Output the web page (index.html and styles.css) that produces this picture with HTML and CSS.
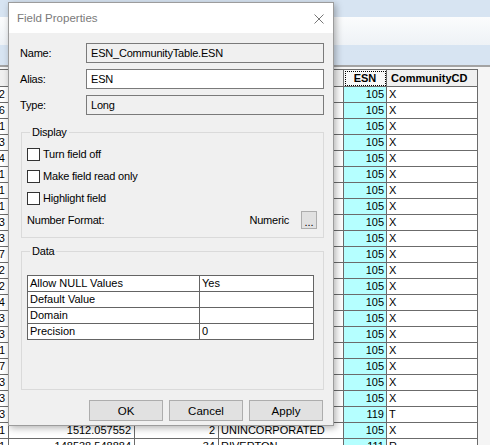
FILE: index.html
```html
<!DOCTYPE html>
<html lang="en">
  <head>
    <meta charset="UTF-8" />
    <meta name="viewport" content="width=device-width, initial-scale=1.0" />
    <title>Attribute Table - Field Properties</title>
    <link rel="stylesheet" href="styles.css">
  </head>
  <body>
    <div class="app">
      <div class="tabs"></div>
      <div class="ribbon"></div>
      <div class="toolbar"></div>
      <div class="grid-wrap">
        <table class="grid">
          <colgroup>
            <col class="w1"><col class="w2"><col class="w3"><col class="w4"><col class="w5"><col class="w6">
          </colgroup>
          <thead>
            <tr><th></th><th>Shape_Area</th><th>CityID</th><th>City</th><th class="focus">ESN</th><th class="txt">CommunityCD</th></tr>
          </thead>
          <tbody>
            <tr><td class="num">1002</td><td class="num">2841.113270</td><td class="num">2</td><td>UNINCORPORATED</td><td class="esn">105</td><td>X</td></tr>
            <tr><td class="num">1006</td><td class="num">5520.904117</td><td class="num">2</td><td>UNINCORPORATED</td><td class="esn">105</td><td>X</td></tr>
            <tr><td class="num">1011</td><td class="num">731.208845</td><td class="num">2</td><td>UNINCORPORATED</td><td class="esn">105</td><td>X</td></tr>
            <tr><td class="num">1013</td><td class="num">12874.660231</td><td class="num">2</td><td>UNINCORPORATED</td><td class="esn">105</td><td>X</td></tr>
            <tr><td class="num">1014</td><td class="num">4402.518890</td><td class="num">2</td><td>UNINCORPORATED</td><td class="esn">105</td><td>X</td></tr>
            <tr><td class="num">1021</td><td class="num">998.730412</td><td class="num">2</td><td>UNINCORPORATED</td><td class="esn">105</td><td>X</td></tr>
            <tr><td class="num">1031</td><td class="num">3316.052274</td><td class="num">2</td><td>UNINCORPORATED</td><td class="esn">105</td><td>X</td></tr>
            <tr><td class="num">1041</td><td class="num">620.481193</td><td class="num">2</td><td>UNINCORPORATED</td><td class="esn">105</td><td>X</td></tr>
            <tr><td class="num">1043</td><td class="num">7745.209938</td><td class="num">2</td><td>UNINCORPORATED</td><td class="esn">105</td><td>X</td></tr>
            <tr><td class="num">1053</td><td class="num">2209.876501</td><td class="num">2</td><td>UNINCORPORATED</td><td class="esn">105</td><td>X</td></tr>
            <tr><td class="num">1057</td><td class="num">15190.332480</td><td class="num">2</td><td>UNINCORPORATED</td><td class="esn">105</td><td>X</td></tr>
            <tr><td class="num">1062</td><td class="num">3408.117622</td><td class="num">2</td><td>UNINCORPORATED</td><td class="esn">105</td><td>X</td></tr>
            <tr><td class="num">1072</td><td class="num">870.905514</td><td class="num">2</td><td>UNINCORPORATED</td><td class="esn">105</td><td>X</td></tr>
            <tr><td class="num">1074</td><td class="num">6112.448027</td><td class="num">2</td><td>UNINCORPORATED</td><td class="esn">105</td><td>X</td></tr>
            <tr><td class="num">1083</td><td class="num">1893.620174</td><td class="num">2</td><td>UNINCORPORATED</td><td class="esn">105</td><td>X</td></tr>
            <tr><td class="num">1093</td><td class="num">4076.311908</td><td class="num">2</td><td>UNINCORPORATED</td><td class="esn">105</td><td>X</td></tr>
            <tr><td class="num">1101</td><td class="num">2530.064416</td><td class="num">2</td><td>UNINCORPORATED</td><td class="esn">105</td><td>X</td></tr>
            <tr><td class="num">1107</td><td class="num">9981.750236</td><td class="num">2</td><td>UNINCORPORATED</td><td class="esn">105</td><td>X</td></tr>
            <tr><td class="num">1113</td><td class="num">1204.887310</td><td class="num">2</td><td>UNINCORPORATED</td><td class="esn">105</td><td>X</td></tr>
            <tr><td class="num">1123</td><td class="num">3650.420581</td><td class="num">2</td><td>UNINCORPORATED</td><td class="esn">105</td><td>X</td></tr>
            <tr><td class="num">1133</td><td class="num">22417.905562</td><td class="num">40</td><td>THAYNE</td><td class="esn">119</td><td>T</td></tr>
            <tr><td class="num">1141</td><td class="num">1512.057552</td><td class="num">2</td><td>UNINCORPORATED</td><td class="esn">105</td><td>X</td></tr>
            <tr><td class="num">1151</td><td class="num">148538.548884</td><td class="num">34</td><td>RIVERTON</td><td class="esn">111</td><td>R</td></tr>
          </tbody>
        </table>
      </div>
    </div>

    <!-- modal dialog, floats over the table -->
    <div class="dialog">
      <div class="titlebar">
        <span class="title">Field Properties</span>
        <svg class="close" width="10" height="10" viewBox="0 0 10 10">
          <path d="M0.5 0.5 L9.5 9.5 M9.5 0.5 L0.5 9.5" stroke="#777" stroke-width="1" fill="none" />
        </svg>
      </div>
      <div class="dlg-body">
        <div class="field-row">
          <label>Name:</label>
          <div class="textbox disabled">ESN_CommunityTable.ESN</div>
        </div>
        <div class="field-row">
          <label>Alias:</label>
          <div class="textbox">ESN</div>
        </div>
        <div class="field-row">
          <label>Type:</label>
          <div class="textbox disabled">Long</div>
        </div>

        <fieldset class="group display">
          <legend>Display</legend>
          <div class="check"><input type="checkbox" class="cb"><span>Turn field off</span></div>
          <div class="check"><input type="checkbox" class="cb"><span>Make field read only</span></div>
          <div class="check"><input type="checkbox" class="cb"><span>Highlight field</span></div>
          <div class="format-row">
            <span>Number Format:</span>
            <span class="format-val">Numeric <button class="dots">...</button></span>
          </div>
        </fieldset>

        <fieldset class="group data">
          <legend>Data</legend>
          <table class="props">
            <tr><td class="key">Allow NULL Values</td><td>Yes</td></tr>
            <tr><td class="key">Default Value</td><td></td></tr>
            <tr><td class="key">Domain</td><td></td></tr>
            <tr><td class="key">Precision</td><td>0</td></tr>
          </table>
        </fieldset>

        <div class="buttons">
          <button class="btn">OK</button>
          <button class="btn">Cancel</button>
          <button class="btn">Apply</button>
        </div>
      </div>
    </div>
  </body>
</html>
```

FILE: styles.css
```css
body {
  margin: 0;
  width: 490px;
  height: 445px;
  overflow: hidden;
  font-family: "Liberation Sans", Arial, sans-serif;
  background: #f5f5f5;
}

/* application frame behind the dialog */
.tabs {
  height: 17px;
  background: #d7e4f2;
}
.ribbon {
  height: 28px;
  background: linear-gradient(#fbfcfd, #eef2f6);
}
.toolbar {
  height: 20px;
  background: #d7e4f2;
  border-bottom: 2px solid #a3a3a3;
}
.grid-wrap {
  padding-top: 2px;
  margin-left: -33px;
}
.grid {
  border-collapse: collapse;
  table-layout: fixed;
  width: 510px;
  font-size: 11px;
  background: #fff;
}
.w1 { width: 41px; }
.w2 { width: 126px; }
.w3 { width: 84px; }
.w4 { width: 125px; }
.w5 { width: 43px; }
.w6 { width: 91px; }
.grid th,
.grid td {
  border: 1px solid #6b6b6b;
  height: 15px;
  line-height: 15px;
  padding: 0 2px;
  white-space: nowrap;
  overflow: hidden;
}
.grid th {
  height: 16px;
  background: #f0f0f0;
  font-weight: bold;
  text-align: center;
}
.grid th.txt {
  text-align: left;
  padding-left: 4px;
}
.grid th.focus {
  background: #f8f8f8;
  outline: 1px dotted #000;
  outline-offset: -2px;
}
.grid td.num {
  text-align: right;
  padding-right: 3px;
}
.grid td.esn {
  background: #b5ffff;
  text-align: right;
  padding-right: 2px;
}

/* Field Properties dialog */
.dialog {
  position: absolute;
  left: 8px;
  top: 2px;
  width: 324px;
  height: 422px;
  border: 1px solid #9c9c9c;
  background: #f0f0f0;
  box-shadow: 2px 2px 7px rgba(0, 0, 0, 0.3);
  font-size: 11px;
  letter-spacing: -0.2px;
}
.titlebar {
  height: 30px;
  background: #fff;
  display: flex;
  align-items: center;
  justify-content: space-between;
  padding: 0 9px 0 8px;
}
.title {
  font-size: 11.5px;
  color: #7a7a7a;
  letter-spacing: 0;
}
.close {
  margin-top: 1px;
}
.dlg-body {
  padding: 10px 9px 0 11px;
}
.field-row {
  display: flex;
  align-items: center;
  height: 20px;
  margin-bottom: 6px;
}
.field-row label {
  width: 66px;
}
.textbox {
  flex: 1;
  height: 20px;
  box-sizing: border-box;
  border: 1px solid #7a7a7a;
  background: #fff;
  padding: 0 4px;
  line-height: 18px;
}
.textbox.disabled {
  background: #f0f0f0;
}

.group {
  border: 1px solid #dadada;
  margin: 10px 0 0 1px;
  padding: 4px 5px 6px 5px;
  min-width: 0;
}
.group legend {
  padding: 0 2px;
  margin-left: 3px;
  line-height: 14px;
}
.check {
  display: flex;
  align-items: center;
  height: 22px;
}
.cb {
  appearance: none;
  -webkit-appearance: none;
  width: 13px;
  height: 13px;
  margin: 0 3px 0 0;
  border: 1px solid #333;
  background: #fff;
}
.format-row {
  display: flex;
  align-items: center;
  justify-content: space-between;
  height: 22px;
}
.format-val {
  display: flex;
  align-items: center;
}
.dots {
  width: 16px;
  height: 18px;
  margin-left: 12px;
  margin-right: 1px;
  padding: 0;
  border: 1px solid #adadad;
  background: #e1e1e1;
  font-family: inherit;
  font-size: 11px;
  line-height: 20px;
}

.group.data {
  margin-top: 6px;
  padding: 17px 5px 49px 5px;
}
.props {
  width: 287px;
  border-collapse: collapse;
  background: #fff;
  letter-spacing: 0;
}
.props td {
  border: 1px solid #646464;
  height: 15px;
  line-height: 15px;
  padding: 0 2px;
}
.props td.key {
  width: 167px;
}

.buttons {
  display: flex;
  justify-content: flex-end;
  gap: 6px;
  margin-top: 10px;
  padding-right: 1px;
}
.btn {
  width: 74px;
  height: 21px;
  border: 1px solid #adadad;
  background: #e1e1e1;
  font-family: inherit;
  font-size: 11.5px;
  letter-spacing: 0;
  padding: 0;
}
```
